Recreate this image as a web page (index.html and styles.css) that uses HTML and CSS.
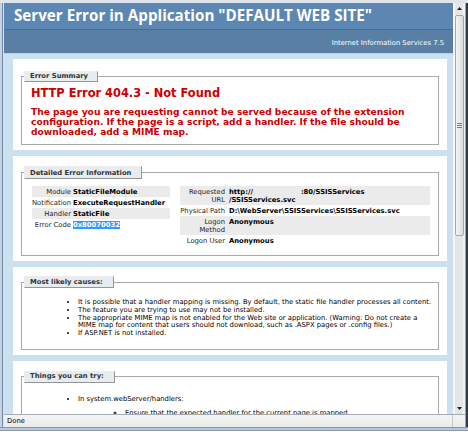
FILE: index.html
```html
<!DOCTYPE html>
<html>
<head>
<meta charset="utf-8">
<title>IIS 7.5 Detailed Error - 404.3 - Not Found</title>
<link rel="stylesheet" href="styles.css">
</head>
<body>
<div class="window">
  <div class="main">
    <div class="lframe"></div>
    <div class="viewport">
      <div class="header"><h1>Server Error in Application "DEFAULT WEB SITE"</h1></div>
      <div class="server-version">Internet Information Services 7.5</div>
      <div class="content">
        <div class="container c1">
          <fieldset>
            <legend class="lg-small">Error Summary</legend>
            <h2>HTTP Error 404.3 - Not Found</h2>
            <h3>The page you are requesting cannot be served because of the extension<br>configuration. If the page is a script, add a handler. If the file should be<br>downloaded, add a MIME map.</h3>
          </fieldset>
        </div>
        <div class="container c2">
          <fieldset>
            <legend class="lg-big">Detailed Error Information</legend>
            <div class="details">
              <table class="tleft">
                <tr class="alt"><th>Module</th><td>StaticFileModule</td></tr>
                <tr><th>Notification</th><td>ExecuteRequestHandler</td></tr>
                <tr class="alt"><th>Handler</th><td>StaticFile</td></tr>
                <tr><th>Error Code</th><td><span class="selected">0x80070032</span></td></tr>
              </table>
              <table class="tright">
                <tr class="alt"><th>Requested<br>URL</th><td>http://<span class="redacted"></span>:80/SSISServices<br>/SSISServices.svc</td></tr>
                <tr><th>Physical Path</th><td>D:\WebServer\SSISServices\SSISServices.svc</td></tr>
                <tr class="alt"><th>Logon<br>Method</th><td>Anonymous</td></tr>
                <tr><th>Logon User</th><td>Anonymous</td></tr>
              </table>
            </div>
          </fieldset>
        </div>
        <div class="container c3">
          <fieldset>
            <legend class="lg-mid">Most likely causes:</legend>
            <ul class="list">
              <li>It is possible that a handler mapping is missing. By default, the static file handler processes all content.</li>
              <li>The feature you are trying to use may not be installed.</li>
              <li>The appropriate MIME map is not enabled for the Web site or application. (Warning: Do not create a<br>MIME map for content that users should not download, such as .ASPX pages or .config files.)</li>
              <li>If ASP.NET is not installed.</li>
            </ul>
          </fieldset>
        </div>
        <div class="container c4">
          <fieldset>
            <legend class="lg-mid">Things you can try:</legend>
            <ul class="list">
              <li>In system.webServer/handlers:
                <ul class="sublist">
                  <li>Ensure that the expected handler for the current page is mapped.</li>
                </ul>
              </li>
            </ul>
          </fieldset>
        </div>
      </div>
    </div>
    <div class="scrollbar">
      <div class="sb-btn"><svg width="5" height="3" viewBox="0 0 5 3"><polygon points="0,3 5,3 2.5,0" fill="#222"/></svg></div>
      <div class="sb-track">
        <div class="sb-thumb"><div class="sb-grip"></div></div>
      </div>
      <div class="sb-btn"><svg width="5" height="3" viewBox="0 0 5 3"><polygon points="0,0 5,0 2.5,3" fill="#222"/></svg></div>
    </div>
    <div class="rframe"></div>
  </div>
  <div class="status-row">
    <div class="lframe"></div>
    <div class="status">
      <span class="status-text">Done</span>
      <span class="status-cell"></span>
    </div>
    <div class="rframe"></div>
  </div>
  <div class="bframe"></div>
</div>
</body>
</html>
```

FILE: styles.css
```css
* { box-sizing: border-box; }
html, body { margin: 0; padding: 0; }
body {
  width: 468px;
  height: 444px;
  overflow: hidden;
  background: #ffffff;
  font-family: "DejaVu Sans", Verdana, sans-serif;
  font-size: 6.8px;
  line-height: 7.8px;
  color: #000;
}
.window {
  height: 431px;
  display: flex;
  flex-direction: column;
}
.main {
  height: 414px;
  display: flex;
  border-top: 3px solid #dfe5ec;
}
.lframe {
  width: 4px;
  flex: none;
  background: linear-gradient(to right, #c7d3e1 0 2px, #7089a9 2px 3px, #d4e0ec 3px 4px);
}
.rframe {
  width: 3px;
  flex: none;
  background: linear-gradient(to right, #9aa3ae 0 1px, #303a47 1px 3px);
}
.viewport {
  flex: 1;
  min-width: 0;
  overflow: hidden;
  background: #cbe1ef;
}
.header {
  height: 26px;
  padding: 0 0 2px 10px;
  background: #5c87b2;
}
.header h1 {
  margin: 0;
  font-family: "Open Sans", "Liberation Sans", sans-serif;
  font-weight: bold;
  font-size: 15.2px;
  line-height: 24px;
  color: #fff;
  white-space: nowrap;
}
.server-version {
  height: 25px;
  padding: 8.5px 9px 0 0;
  background: #5a7fa5;
  border-top: 1px solid #4a6c8e;
  border-bottom: 1px solid #c1cfdd;
  color: #fff;
  text-align: right;
  line-height: 8px;
}
.content {
  padding-left: 9px;
}
.container {
  width: 434px;
  background: #fff;
  padding: 10px 8px 5px 8px;
  margin-top: 6px;
}
.c1 { margin-top: 5px; padding-top: 12px; }
.c3 { padding-top: 9px; }
fieldset {
  margin: 0;
  padding: 0;
  min-width: 0;
  border: 1px solid #a9a9a9;
}
legend {
  margin-left: 2px;
  padding: 1.5px 10px 1.5px 5px;
  line-height: 7px;
  font-weight: bold;
  color: #333;
  background: #e7ecf0;
  border: 1px solid;
  border-color: #ededed #969696 #969696 #ededed;
}
.lg-small { padding-top: 1px; padding-bottom: 1px; padding-right: 9px; }
.lg-big { padding-top: 2.5px; padding-bottom: 1.5px; }
h2 {
  margin: 5px 0 0 9px;
  font-size: 11.4px;
  line-height: 13px;
  font-weight: bold;
  color: #cc0000;
  white-space: nowrap;
}
h3 {
  margin: 7px 0 7px 9px;
  font-size: 9.15px;
  line-height: 10px;
  font-weight: bold;
  color: #cc0000;
  white-space: nowrap;
}
.details {
  display: flex;
  align-items: flex-start;
  gap: 10px;
  margin: 7px 0 9px 10px;
}
table {
  flex: none;
  border-collapse: collapse;
  border-spacing: 0;
}
.tleft { width: 138px; }
.tright { width: 250px; }
th, td {
  padding: 1.5px 0;
  vertical-align: top;
  line-height: 8px;
  white-space: nowrap;
}
th {
  font-weight: normal;
  text-align: right;
  color: #222;
}
td { font-weight: bold; text-align: left; }
.tleft th { width: 41px; padding-right: 2px; }
.tright th { width: 49px; padding-right: 4px; }
tr.alt { background: #ebebeb; }
.selected {
  background: #3399ff;
  color: #fff;
}
.redacted {
  display: inline-block;
  width: 48px;
  height: 1px;
}
.list {
  margin: 11px 0 11px 0;
  padding-left: 56px;
  list-style: disc;
}
.list li { white-space: nowrap; }
.c4 .list { margin-top: 13.5px; }
.sublist {
  margin: 5.5px 0 0 0;
  padding-left: 47px;
  list-style: circle;
}
.scrollbar {
  width: 12px;
  flex: none;
  display: flex;
  flex-direction: column;
  background: linear-gradient(to right, #f6f6f6 0 2px, #e6e6e6 2px 10px, #f2f2f2 10px 12px);
}
.sb-btn {
  height: 11px;
  flex: none;
  display: flex;
  align-items: center;
  justify-content: center;
}
.sb-track {
  flex: 1;
  padding: 1px 1px 0 2px;
}
.sb-thumb {
  height: 221px;
  border: 1px solid #a3a8ae;
  border-radius: 2px;
  background: linear-gradient(to right, #f4f4f4, #dcdcdc);
  display: flex;
  align-items: center;
  justify-content: center;
}
.sb-grip {
  width: 5px;
  height: 5px;
  background: repeating-linear-gradient(to bottom, #7a7f86 0 1px, transparent 1px 2px);
}
.status-row {
  height: 13px;
  display: flex;
}
.status {
  flex: 1;
  display: flex;
  align-items: center;
  background: linear-gradient(to bottom, #f4f4f4, #ebebeb);
  border-top: 1px solid #a5abb3;
}
.status-text {
  flex: 1;
  padding-left: 3px;
  line-height: 8px;
}
.status-cell {
  width: 13px;
  height: 100%;
  border-left: 1px solid #c8c8c8;
}
.bframe {
  height: 4px;
  background: linear-gradient(to bottom, #8195b0 0 1px, #b9c7d8 1px 3px, #8a9bb2 3px 4px);
}
```
